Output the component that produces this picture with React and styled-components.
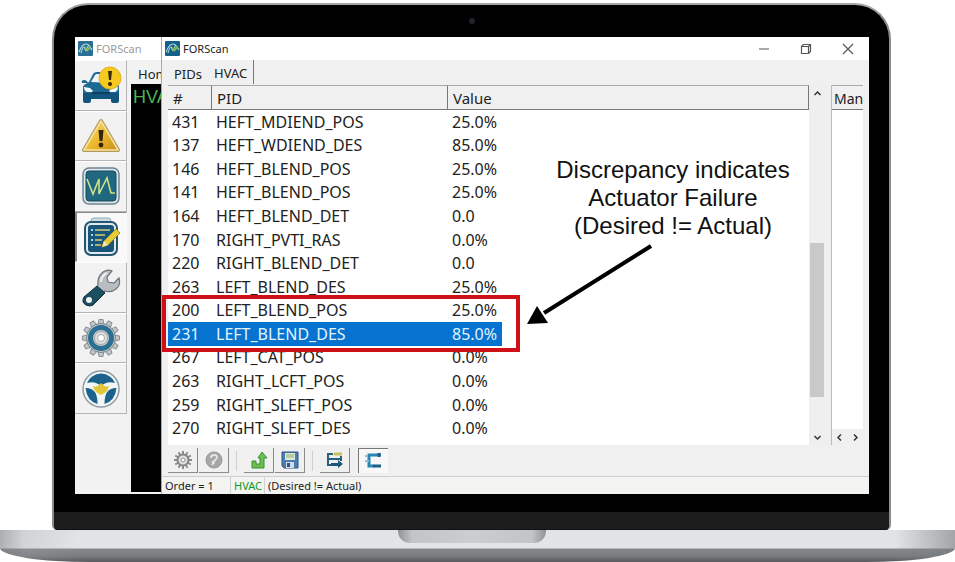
import React from 'react';
import styled, { createGlobalStyle, css } from 'styled-components';

const fonts = {
  ui: "'Noto Sans', 'Open Sans', sans-serif",
  note: "'Liberation Sans', Arial, sans-serif",
};

const GlobalStyle = createGlobalStyle`
  * {
    box-sizing: border-box;
  }

  body {
    margin: 0;
    background: #fff;
    font-family: ${fonts.ui};
    color: #222;
  }

  button {
    margin: 0;
    padding: 0;
    border: 0;
    background: none;
    font: inherit;
    color: inherit;
  }

  svg {
    display: block;
  }
`;

/* ---------- laptop ---------- */

const Page = styled.main`
  padding-top: 3px;
  overflow: hidden;
`;

const Lid = styled.div`
  margin: 0 64px 0 52px;
  border: 2px solid #8d8d8d;
  border-color: #a5a5a5 #8d8d8d #111;
  border-bottom-width: 1px;
  border-radius: 36px 36px 5px 5px;
  background: #000;
  overflow: hidden;
`;

const TopBezel = styled.div`
  display: flex;
  justify-content: center;
  align-items: center;
  height: 32px;
`;

const Camera = styled.span`
  width: 6px;
  height: 6px;
  border-radius: 50%;
  background: #20242b;
`;

const Screen = styled.div`
  display: flex;
  height: 457px;
  margin: 0 20px 18px 21px;
  background: #000;
`;

const Chin = styled.div`
  height: 17px;
  background: #1d1d1d;
`;

const Base = styled.div`
  display: flex;
  justify-content: center;
  height: 32px;
  padding-right: 11px;
  border-radius: 0 0 90px 90px / 0 0 14px 14px;
  background:
    linear-gradient(90deg, rgba(120, 124, 128, 0.5), rgba(160, 164, 168, 0.25) 24px, transparent 80px, transparent calc(100% - 60px), rgba(120, 124, 128, 0.6)),
    linear-gradient(#e0e3e4, #e3e6e8 18px, #85898c 19px, #7a7d80 26px, #56595c);
`;

const Notch = styled.div`
  width: 148px;
  height: 13px;
  border-radius: 0 0 12px 12px;
  background: linear-gradient(90deg, #8f9294, #c2c5c7 14px, #cbced0 50%, #c2c5c7 calc(100% - 14px), #8f9294);
`;

/* ---------- windows ---------- */

const TitleBar = styled.header`
  display: flex;
  align-items: center;
  gap: 3px;
  height: 23px;
  flex: none;
  padding-left: 3px;
  background: #fff;
  font-size: 11px;
  color: ${(props) => (props.$inactive ? '#9a9a9a' : '#222')};
`;

const WindowControls = styled.div`
  display: flex;
  margin-left: auto;
`;

const WindowButton = styled.button`
  display: grid;
  place-items: center;
  width: 42px;
  height: 23px;
`;

const BackWindow = styled.section`
  flex: none;
  width: 86px;
  display: flex;
  flex-direction: column;
  overflow: hidden;
  background: #f2f2f3;
`;

const BackBody = styled.div`
  display: flex;
  flex: 1;
`;

const SideBar = styled.nav`
  flex: none;
  width: 52px;
  margin-right: 4px;
`;

const SideList = styled.div`
  display: grid;
  grid-template-rows: repeat(7, 1fr);
  height: 354px;
`;

const SideButton = styled.button`
  display: grid;
  place-items: center;
  border-top: 1px solid #fff;
  border-right: 1px solid #b4b4b4;
  border-bottom: 1px solid #b4b4b4;
  background: #f2f2f3;

  ${(props) => props.$pressed && css`
    border-top-color: #888;
    border-left: 2px solid #888;
    border-right-color: #f8f8f8;
    border-bottom-color: #f8f8f8;
    background: #f9f9fa;
  `}
`;

const BackContent = styled.div`
  flex: 1;
  min-width: 0;
  display: flex;
  flex-direction: column;
  overflow: hidden;
`;

const BackTab = styled.div`
  height: 24px;
  padding-left: 7px;
  font-size: 13px;
  line-height: 28px;
  white-space: nowrap;
`;

const BackConsole = styled.div`
  flex: 1;
  margin-bottom: 2px;
  padding-left: 2px;
  background: #000;
  color: #4fb34f;
  font-family: ${fonts.note};
  font-size: 18px;
  line-height: 26px;
`;

const FrontWindow = styled.section`
  flex: 1;
  min-width: 0;
  display: flex;
  flex-direction: column;
  border-left: 1px solid #8fb0bf;
  background: #f0f0f0;
`;

const Tabs = styled.div`
  display: flex;
  height: 25px;
  padding-left: 6px;
`;

const Tab = styled.button`
  height: 24px;
  padding: 0 6px;
  font-size: 13px;
  line-height: ${(props) => (props.$active ? '26px' : '28px')};

  ${(props) => props.$active && css`
    border-right: 1px solid #777;
  `}
`;

const Panes = styled.div`
  display: flex;
  height: 360px;
  padding: 0 6px;
`;

const ListPane = styled.div`
  position: relative;
  flex: 1;
  min-width: 0;
  background: #fff;
`;

const Table = styled.table`
  width: 100%;
  height: 355px;
  border-collapse: separate;
  border-spacing: 0;
  table-layout: fixed;
  font-size: 16px;
  line-height: 20px;
`;

const HeadCell = styled.th`
  width: ${(props) => props.$width || 'auto'};
  height: 25px;
  padding: 0 5px;
  border-top: 1px solid #aaa;
  border-right: 1px solid #777;
  border-bottom: 1px solid #777;
  background: #f0f0f0;
  text-align: left;
  font-weight: 400;
  font-size: 15px;
`;

const Row = styled.tr`
  color: ${(props) => (props.$selected ? '#e2f4ff' : '#222')};

  td {
    padding: 0 4px;
    white-space: nowrap;
    background: ${(props) => (props.$selected ? '#0573cf' : 'none')};
  }

  td:last-child {
    background: ${(props) => (props.$selected ? 'linear-gradient(90deg, #0573cf 54px, transparent 54px)' : 'none')};
  }
`;

const ScrollTrack = styled.div`
  display: flex;
  flex-direction: column;
  width: 23px;
  padding-right: 6px;
  border-right: 1px solid #bbb;
  background: #efefef;
`;

const ScrollButton = styled.button`
  display: grid;
  place-items: center;
  width: 16px;
  height: 16px;
`;

const Thumb = styled.div`
  width: 14px;
  height: 154px;
  margin: 142px 0 auto 1px;
  background: #c9c9c9;
`;

const SidePane = styled.div`
  display: flex;
  flex-direction: column;
  width: 31px;
  background: #fff;
`;

const SideHead = styled.div`
  height: 25px;
  padding-left: 2px;
  border-top: 1px solid #aaa;
  border-bottom: 1px solid #777;
  background: #f0f0f0;
  font-size: 14px;
  line-height: 25px;
  overflow: hidden;
`;

const SideScroll = styled.div`
  display: flex;
  margin-top: auto;
  background: #f0f0f0;
`;

/* ---------- bottom bars ---------- */

const ToolBar = styled.div`
  display: flex;
  align-items: center;
  gap: 1px;
  height: 31px;
  padding-left: 6px;
`;

const ToolButton = styled.button`
  display: grid;
  place-items: center;
  width: 30px;
  height: 25px;
  border-right: 1px solid #8c8c8c;
  border-bottom: 1px solid #8c8c8c;

  ${(props) => props.$pressed && css`
    margin-left: 7px;
    border: 0 solid #777;
    border-top-width: 1px;
    border-left-width: 1px;
    background: #f8f8f8;
  `}
`;

const Separator = styled.span`
  width: 1px;
  height: 20px;
  margin: 0 6px;
  background: #cfcfcf;
`;

const StatusBar = styled.footer`
  display: flex;
  align-items: center;
  height: 18px;
  border-top: 1px solid #cfcfcf;
  background: #f3f4f2;
  font-size: 11px;
  line-height: 17px;
`;

const StatusCell = styled.span`
  width: ${(props) => props.$width || 'auto'};
  padding-left: 3px;
  border-right: ${(props) => (props.$width ? '1px solid #d2d2d2' : '0')};
  color: ${(props) => (props.$on ? '#0b9a1c' : '#222')};
`;

/* ---------- annotation ---------- */

const Highlight = styled.div`
  position: absolute;
  top: 210px;
  left: -6px;
  width: 358px;
  height: 57px;
  border: 4px solid #cf1117;
  pointer-events: none;
`;

const Note = styled.p`
  position: absolute;
  top: 71px;
  left: 380px;
  width: 250px;
  margin: 0;
  font-family: ${fonts.note};
  font-size: 24px;
  line-height: 28px;
  text-align: center;
  color: #111;
`;

const Arrow = styled.svg`
  position: absolute;
  top: 155px;
  left: 354px;
`;

/* ---------- icons ---------- */

const AppIcon = ({ faded }) => (
  <svg width="15" height="15" viewBox="0 0 15 15" opacity={faded ? 0.9 : 1}>
    <rect width="15" height="15" rx="1" fill="#13608c" />
    <path d="M1 11C3 6 5 3 8 3c3 0 4 3 6 6" stroke="#a9d6df" strokeWidth="1.2" fill="none" />
    <path d="M3 12c1-4 2-6 3-6s1 4 2 4 1-5 3-6" stroke="#d5e9e2" strokeWidth="1" fill="none" />
    <path d="M6 4l3 4 3-4 1 3-4 4z" fill="#78b843" />
  </svg>
);

const CarIcon = () => (
  <svg width="42" height="40" viewBox="0 0 42 40">
    <path d="M4 20l5-3 4-8q1-2 4-2h14q3 0 5 5l2 6q1 2 1 5v9q0 2-1 2H4q-1 0-1-2V23q0-2 1-3z" fill="#1c6a93" />
    <path d="M11 17l4-7q1-1 2-1h13v9z" fill="#eef4f6" />
    <path d="M2 18q-1-3 2-3 3 0 4 3z" fill="#1c6a93" />
    <path d="M4 22l6 1 3 3-1 1H7q-3-1-3-5zM38 22l-6 1-3 3 1 1h5q3-1 3-5z" fill="#f3fafc" />
    <path d="M3 28h36v8q0 2-2 2h-4q-2 0-2-2v-2H11v2q0 2-2 2H5q-2 0-2-2z" fill="#12557d" />
    <path d="M12 28h18" stroke="#0b3f5f" strokeWidth="2" />
    <circle cx="30" cy="13" r="11" fill="#f5c91f" stroke="#e3b11b" />
    <path d="M28 6h4l-1 9h-2z" fill="#3b2a08" />
    <circle cx="30" cy="19" r="2" fill="#3b2a08" />
  </svg>
);

const WarningIcon = () => (
  <svg width="40" height="36" viewBox="0 0 40 36">
    <defs>
      <linearGradient id="warn" x1="0" y1="0" x2="1" y2="1">
        <stop offset="0" stopColor="#fbe47d" />
        <stop offset="0.5" stopColor="#eebb31" />
        <stop offset="1" stopColor="#c98d16" />
      </linearGradient>
    </defs>
    <path d="M20 3L37 32H3z" fill="url(#warn)" stroke="#b79a58" strokeWidth="4" strokeLinejoin="round" />
    <path d="M20 3L37 32H3z" fill="url(#warn)" stroke="#f6e3a2" strokeWidth="1.5" strokeLinejoin="round" />
    <path d="M17.5 12h5l-1 11h-3z" fill="#33250c" />
    <circle cx="20" cy="27" r="2.4" fill="#33250c" />
  </svg>
);

const ScopeIcon = () => (
  <svg width="38" height="38" viewBox="0 0 38 38">
    <rect x="1" y="1" width="36" height="36" rx="6" fill="#dfe6e9" stroke="#6c8592" strokeWidth="1.5" />
    <rect x="4" y="4" width="30" height="30" rx="3" fill="#1f687f" stroke="#16485c" />
    <path d="M5 12l6 15 6-15v15l8-16 4 15h4" fill="none" stroke="#cfe08a" strokeWidth="1.6" />
  </svg>
);

const NotesIcon = () => (
  <svg width="38" height="40" viewBox="0 0 38 40">
    <rect x="8" y="1" width="20" height="8" rx="3" fill="#cddce4" stroke="#8fabb9" />
    <rect x="2" y="5" width="32" height="33" rx="6" fill="#e3eaee" stroke="#24556f" strokeWidth="2" />
    <rect x="5" y="8" width="26" height="27" rx="3" fill="#17567a" />
    <path d="M8 13h2M8 18h2M8 23h2M8 28h2" stroke="#a9d2e2" strokeWidth="2" />
    <path d="M12 13h15M12 18h10M12 23h7M12 28h6" stroke="#d5cf79" strokeWidth="1.5" />
    <path d="M19 30l2-6 12-12 4 4-12 12z" fill="#e5cd39" stroke="#a98d1c" />
    <path d="M19 30l2-6 4 4z" fill="#f3e8bd" />
  </svg>
);

const WrenchIcon = () => (
  <svg width="40" height="40" viewBox="0 0 40 40">
    <path d="M17 17q-1-8 5-13 5-3 9-1l-5 6 1 5 6 1 5-5q2 7-3 11-5 4-11 2l-2 2-6-6z" fill="#b9bdc0" stroke="#70767a" strokeWidth="1.2" />
    <path d="M20 14q0-6 6-9" stroke="#eef0f1" strokeWidth="2" fill="none" />
    <path d="M16 18l8 7-12 12q-3 2-7 0-5-3-2-8z" fill="#1b4f60" stroke="#12313d" />
    <circle cx="8" cy="32" r="3" fill="#f2f2f3" />
  </svg>
);

const teeth = Array.from({ length: 12 }, (_, i) => i * 30);

const BigGearIcon = () => (
  <svg width="40" height="40" viewBox="0 0 40 40">
    {teeth.map((angle) => (
      <path
        key={angle}
        d="M17 7l1-5.500h4l1 5.500z"
        fill="#c3c7c9"
        stroke="#8a9094"
        transform={`rotate(${angle} 20 20)`}
      />
    ))}
    <circle cx="20" cy="20" r="14.500" fill="#c3c7c9" stroke="#7f868a" />
    <circle cx="20" cy="20" r="10.500" fill="none" stroke="#2b6f93" strokeWidth="5" />
    <circle cx="20" cy="20" r="6.500" fill="#dedede" stroke="#a8a8a8" />
    <circle cx="20" cy="20" r="3.500" fill="#fff" stroke="#aaa" />
  </svg>
);

const WheelIcon = () => (
  <svg width="40" height="40" viewBox="0 0 40 40">
    <circle cx="20" cy="20" r="18" fill="#f1f5f6" stroke="#8f9ca4" strokeWidth="1.500" />
    <path d="M6 14Q10 5 20 4.500 30 5 34 14 27 12 23 15q-3 2-6 0-4-3-11-1z" fill="#1b628c" />
    <path d="M4.500 19q7 0 10 5 2 4 2 11Q6 32 4.500 19zM35.500 19q-7 0-10 5-2 4-2 11Q34 32 35.500 19z" fill="#1b628c" />
    <path d="M12 17q4 2 8-3 4 5 8 3-1 6-8 9-7-3-8-9z" fill="#e2c838" />
  </svg>
);

const GearIcon = () => (
  <svg width="20" height="20" viewBox="0 0 20 20">
    {teeth.map((angle) => (
      <rect key={angle} x="9" y="1" width="2" height="4" fill="#8a8a8a" transform={`rotate(${angle} 10 10)`} />
    ))}
    <circle cx="10" cy="10" r="5.500" fill="#e3e3e3" stroke="#858585" strokeWidth="2" />
    <circle cx="10" cy="10" r="2" fill="#fff" stroke="#8a8a8a" />
  </svg>
);

const HelpIcon = () => (
  <svg width="18" height="18" viewBox="0 0 18 18">
    <circle cx="9" cy="9" r="8" fill="#a7a7a7" stroke="#999" />
    <path d="M6 7q0-3 3-3t3 2q0 2-2 3l-3 5M7 10l2 3" fill="none" stroke="#e6e6e6" strokeWidth="1.800" />
  </svg>
);

const UpIcon = () => (
  <svg width="18" height="18" viewBox="0 0 18 18">
    <path d="M2 10v7h12V7h3l-5-6-4 6h2v6H6v-3z" fill="#6abf50" stroke="#3b8f33" />
  </svg>
);

const SaveIcon = () => (
  <svg width="18" height="18" viewBox="0 0 18 18">
    <path d="M1 1h16v16H3l-2-2z" fill="#4b7db2" stroke="#2e5584" />
    <rect x="4" y="2" width="10" height="7" fill="#dfe9d8" />
    <path d="M5 4h8M5 6h8" stroke="#8fb06e" />
    <rect x="5" y="11" width="8" height="6" fill="#d2dce6" />
    <rect x="6" y="12" width="3" height="4" fill="#2e5584" />
  </svg>
);

const ExportIcon = () => (
  <svg width="20" height="18" viewBox="0 0 20 18">
    <path d="M2 3h6M3 2v12h5M3 8h12" fill="none" stroke="#25607f" strokeWidth="2" />
    <path d="M9 3h8" stroke="#c6c163" strokeWidth="3" />
    <path d="M6 12h7V9l5 4-5 4v-2H6z" fill="#1f5578" />
    <path d="M16 5v5" stroke="#25607f" strokeWidth="2" />
  </svg>
);

const BranchIcon = () => (
  <svg width="20" height="18" viewBox="0 0 20 18">
    <path d="M17 3H5v11h5" fill="none" stroke="#2c86b4" strokeWidth="3" />
    <path d="M9 14h8M15 1v4" stroke="#1b5f8c" strokeWidth="3" />
    <path d="M1 9h4M1 4h3" stroke="#86c3e0" strokeWidth="2" />
  </svg>
);

const Chevron = ({ rotate = 0 }) => (
  <svg width="9" height="9" viewBox="0 0 9 9">
    <path d="M1.500 6l3-3 3 3" fill="none" stroke="#333" strokeWidth="1.500" transform={`rotate(${rotate} 4.500 4.500)`} />
  </svg>
);

const ControlIcon = ({ path }) => (
  <svg width="12" height="12" viewBox="0 0 12 12">
    <path d={path} fill="none" stroke="#555" strokeWidth="1.200" />
  </svg>
);

/* ---------- data ---------- */

const sideItems = [
  { label: 'Vehicle', Icon: CarIcon },
  { label: 'Trouble codes', Icon: WarningIcon },
  { label: 'Oscilloscope', Icon: ScopeIcon },
  { label: 'Table', Icon: NotesIcon, pressed: true },
  { label: 'Service', Icon: WrenchIcon },
  { label: 'Settings', Icon: BigGearIcon },
  { label: 'About', Icon: WheelIcon },
];

const controls = [
  { label: 'Minimize', path: 'M1 6h10' },
  { label: 'Restore', path: 'M1.500 3.500h7v7h-7zM1.500 3.500l2-2h7v7l-2 2M8.500 3.500l2-2' },
  { label: 'Close', path: 'M1 1l10 10M11 1L1 11' },
];

const rows = [
  ['431', 'HEFT_MDIEND_POS', '25.0%'],
  ['137', 'HEFT_WDIEND_DES', '85.0%'],
  ['146', 'HEFT_BLEND_POS', '25.0%'],
  ['141', 'HEFT_BLEND_POS', '25.0%'],
  ['164', 'HEFT_BLEND_DET', '0.0'],
  ['170', 'RIGHT_PVTI_RAS', '0.0%'],
  ['220', 'RIGHT_BLEND_DET', '0.0'],
  ['263', 'LEFT_BLEND_DES', '25.0%'],
  ['200', 'LEFT_BLEND_POS', '25.0%'],
  ['231', 'LEFT_BLEND_DES', '85.0%'],
  ['267', 'LEFT_CAT_POS', '0.0%'],
  ['263', 'RIGHT_LCFT_POS', '0.0%'],
  ['259', 'RIGHT_SLEFT_POS', '0.0%'],
  ['270', 'RIGHT_SLEFT_DES', '0.0%'],
];

const selectedId = '231';

/* ---------- components ---------- */

const MainWindow = () => (
  <BackWindow>
    <TitleBar $inactive>
      <AppIcon faded />
      FORScan
    </TitleBar>
    <BackBody>
      <SideBar>
        <SideList>
          {sideItems.map(({ label, Icon, pressed }) => (
            <SideButton key={label} aria-label={label} $pressed={pressed}>
              <Icon />
            </SideButton>
          ))}
        </SideList>
      </SideBar>
      <BackContent>
        <BackTab>Home</BackTab>
        <BackConsole>HVAC</BackConsole>
      </BackContent>
    </BackBody>
  </BackWindow>
);

const PidTable = () => (
  <Table>
    <thead>
      <tr>
        <HeadCell $width="44px">#</HeadCell>
        <HeadCell $width="236px">PID</HeadCell>
        <HeadCell>Value</HeadCell>
      </tr>
    </thead>
    <tbody>
      {rows.map(([id, pid, value], i) => (
        <Row key={i} $selected={id === selectedId}>
          <td>{id}</td>
          <td>{pid}</td>
          <td>{value}</td>
        </Row>
      ))}
    </tbody>
  </Table>
);

const TableWindow = () => (
  <FrontWindow>
    <TitleBar>
      <AppIcon />
      FORScan
      <WindowControls>
        {controls.map(({ label, path }) => (
          <WindowButton key={label} aria-label={label}>
            <ControlIcon path={path} />
          </WindowButton>
        ))}
      </WindowControls>
    </TitleBar>

    <Tabs>
      <Tab>PIDs</Tab>
      <Tab $active>HVAC</Tab>
    </Tabs>

    <Panes>
      <ListPane>
        <PidTable />
        <Highlight />
        <Note>
          Discrepancy indicates<br />
          Actuator Failure<br />
          (Desired != Actual)
        </Note>
        <Arrow width="140" height="90" viewBox="0 0 140 90">
          <path d="M129 6L22 73" stroke="#000" strokeWidth="4" />
          <path d="M5 84L15 66 26 83z" fill="#000" />
        </Arrow>
      </ListPane>
      <ScrollTrack>
        <ScrollButton aria-label="Scroll up"><Chevron /></ScrollButton>
        <Thumb />
        <ScrollButton aria-label="Scroll down"><Chevron rotate={180} /></ScrollButton>
      </ScrollTrack>
      <SidePane>
        <SideHead>Man</SideHead>
        <SideScroll>
          <ScrollButton aria-label="Scroll left"><Chevron rotate={-90} /></ScrollButton>
          <ScrollButton aria-label="Scroll right"><Chevron rotate={90} /></ScrollButton>
        </SideScroll>
      </SidePane>
    </Panes>

    <ToolBar>
      <ToolButton aria-label="Settings"><GearIcon /></ToolButton>
      <ToolButton aria-label="Help"><HelpIcon /></ToolButton>
      <Separator />
      <ToolButton aria-label="Load"><UpIcon /></ToolButton>
      <ToolButton aria-label="Save"><SaveIcon /></ToolButton>
      <Separator />
      <ToolButton aria-label="Export"><ExportIcon /></ToolButton>
      <ToolButton aria-label="Branch" $pressed><BranchIcon /></ToolButton>
    </ToolBar>

    <StatusBar>
      <StatusCell $width="69px">Order = 1</StatusCell>
      <StatusCell $width="34px" $on>HVAC</StatusCell>
      <StatusCell>(Desired != Actual)</StatusCell>
    </StatusBar>
  </FrontWindow>
);

const App = () => (
  <Page>
    <GlobalStyle />
    <Lid>
      <TopBezel>
        <Camera />
      </TopBezel>
      <Screen>
        <MainWindow />
        <TableWindow />
      </Screen>
      <Chin />
    </Lid>
    <Base>
      <Notch />
    </Base>
  </Page>
);

export default App;
